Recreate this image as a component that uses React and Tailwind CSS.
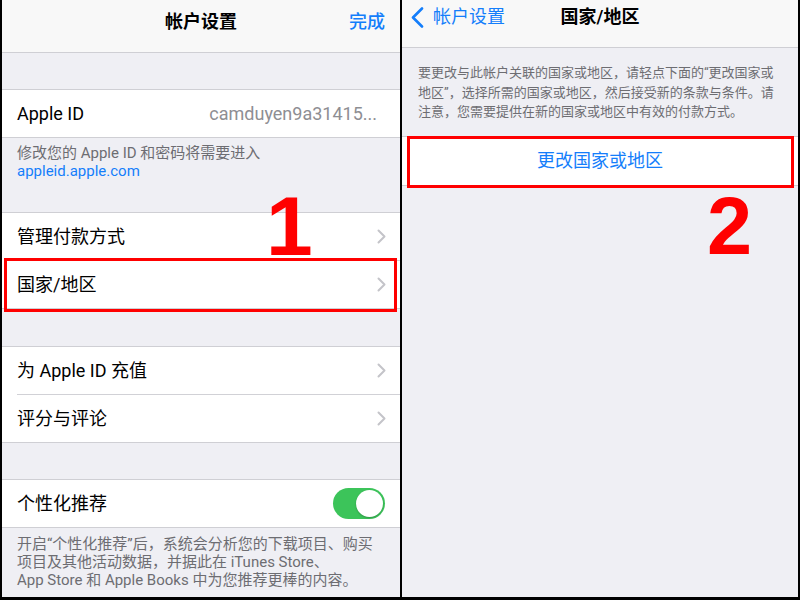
import React from 'react';

const font = { fontFamily: 'Roboto, "Noto Sans CJK SC", sans-serif' };

const Chevron = () => (
    <svg width="9" height="15" viewBox="0 0 9 15" className="shrink-0">
        <path d="M1.5 1.5l6 6-6 6" fill="none" stroke="#c4c4c9" strokeWidth="2" strokeLinecap="round" strokeLinejoin="round" />
    </svg>
);

const Row = ({ label, chevron = true, last = false, children }) => (
    <div className="bg-white">
        <div className="h-[47px] flex items-center pl-[15px] pr-[14px] text-[18px] text-black">
            <span className="flex-1">{label}</span>
            {children}
            {chevron && <Chevron />}
        </div>
        {!last && <div className="ml-[15px] h-px bg-[#d1d1d6]" />}
    </div>
);

const Group = ({ children }) => (
    <div className="border-y border-[#cfcfd4] bg-white">{children}</div>
);

const Toggle = () => (
    <div className="w-[52px] h-[31px] rounded-full bg-[#3cc45a] flex items-center justify-end pr-[2px] mr-[1px]">
        <div className="w-[27px] h-[27px] rounded-full bg-white shadow-[0_1px_2px_rgba(0,0,0,0.25)]" />
    </div>
);

const App = () => {
    return (
        <div style={font} className="relative w-[800px] h-[600px] bg-black flex gap-[2px] pl-[2px] pr-[2px] pb-[3px] overflow-hidden">
            {/* Left panel */}
            <div className="w-[398px] h-full bg-[#efeff4] flex flex-col">
                <div className="h-[53px] shrink-0 bg-[#f8f8f8] border-b border-[#cfcfd4] relative flex justify-center pt-[10px]">
                    <span className="text-[18px] leading-[24px] font-semibold text-black">帐户设置</span>
                    <span className="absolute right-[15px] top-[10px] text-[18px] leading-[24px] font-medium text-[#147efb]">完成</span>
                </div>

                <div className="h-[36px] shrink-0" />
                <Group>
                    <Row label="Apple ID" chevron={false} last>
                        <span className="text-[#8e8e93] pr-[9px]">camduyen9a31415...</span>
                    </Row>
                </Group>
                <div className="pl-[15px] pt-[6px] pb-[32px] text-[15px] leading-[18px] text-[#6d6d72]">
                    <div>修改您的 Apple ID 和密码将需要进入</div>
                    <div className="text-[#147efb]">appleid.apple.com</div>
                </div>

                <Group>
                    <Row label="管理付款方式" />
                    <Row label="国家/地区" last />
                </Group>

                <div className="h-[37px] shrink-0" />
                <Group>
                    <Row label="为 Apple ID 充值" />
                    <Row label="评分与评论" last />
                </Group>

                <div className="h-[36px] shrink-0" />
                <Group>
                    <Row label="个性化推荐" chevron={false} last>
                        <Toggle />
                    </Row>
                </Group>
                <div className="pl-[15px] pt-[7px] text-[15px] leading-[18px] text-[#6d6d72]">
                    开启“个性化推荐”后，系统会分析您的下载项目、购买<br />
                    项目及其他活动数据，并据此在 iTunes Store、<br />
                    App Store 和 Apple Books 中为您推荐更棒的内容。
                </div>
            </div>

            {/* Right panel */}
            <div className="w-[396px] h-full bg-[#efeff4] flex flex-col">
                <div className="h-[48px] shrink-0 bg-[#f8f8f8] border-b border-[#cfcfd4] relative flex justify-center pt-[5px]">
                    <div className="absolute left-[9px] top-[5px] flex items-center gap-[9px] text-[#147efb]">
                        <svg width="13" height="21" viewBox="0 0 13 21">
                            <path d="M11 1.5L2 10.5l9 9" fill="none" stroke="#147efb" strokeWidth="2.6" strokeLinecap="round" strokeLinejoin="round" />
                        </svg>
                        <span className="text-[18px] leading-[24px]">帐户设置</span>
                    </div>
                    <span className="text-[18px] leading-[24px] font-semibold text-black">国家/地区</span>
                </div>
                <div className="pl-[16px] pt-[15px] pb-[14px] text-[13px] leading-[19.5px] text-[#6d6d72]">
                    <p className="w-[362px]">要更改与此帐户关联的国家或地区，请轻点下面的“更改国家或地区”，选择所需的国家或地区，然后接受新的条款与条件。请注意，您需要提供在新的国家或地区中有效的付款方式。</p>
                </div>
                <div className="border-y border-[#cfcfd4] bg-white h-[50px] flex items-center justify-center text-[18px] text-[#147efb]">
                    更改国家或地区
                </div>
            </div>

            {/* Annotations */}
            <div className="absolute left-[4px] top-[258px] w-[393px] h-[54px] border-[3px] border-[#ff0000]" />
            <div className="absolute left-[407px] top-[136px] w-[387px] h-[52px] border-[3px] border-[#ff0000]" />
            <div className="absolute left-[266px] top-[184px] text-[84px] leading-none font-bold text-[#ff0000]" style={{ fontFamily: '"Liberation Sans", Arial, sans-serif' }}>1</div>
            <div className="absolute left-[707px] top-[186px] text-[81px] leading-none font-bold text-[#ff0000]" style={{ fontFamily: '"Liberation Sans", Arial, sans-serif' }}>2</div>
        </div>
    );
};

export default App;
